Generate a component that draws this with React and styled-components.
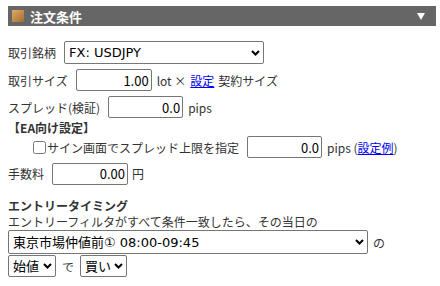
import React from 'react';
import styled, { createGlobalStyle } from 'styled-components';

const GlobalStyle = createGlobalStyle`
  body {
    margin: 0;
    background: #fff;
    font-family: "Noto Sans CJK JP", "Noto Sans", sans-serif;
    font-size: 12px;
    color: #333;
  }
`;

const Panel = styled.div`
  width: 428px;
  padding: 6px 0 0 8px;
`;

const Header = styled.div`
  height: 20px;
  background-color: #666;
  display: flex;
  align-items: center;
  padding: 0 11px 0 4px;
  color: #fff;
`;

const HeaderIcon = styled.span`
  width: 12px;
  height: 12px;
  background: linear-gradient(135deg, #e0aa66 0%, #c08848 55%, #a06c34 100%);
  margin-right: 6px;
`;

const HeaderTitle = styled.span`
  flex: 1;
  font-size: 13px;
  font-weight: bold;
`;

const Toggle = styled.span`
  width: 0;
  height: 0;
  border-left: 4px solid transparent;
  border-right: 4px solid transparent;
  border-top: 7px solid #fff;
`;

const Row = styled.div`
  display: flex;
  align-items: center;
  height: ${({ h }) => h || 22}px;
  margin-top: ${({ mt }) => mt || 0}px;
  padding-left: ${({ indent }) => indent || 0}px;
  white-space: nowrap;
`;

const Label = styled.span`
  margin-right: 8px;
`;

const Unit = styled.span`
  margin-left: ${({ ml }) => (ml === undefined ? 5 : ml)}px;
  margin-right: ${({ mr }) => mr || 0}px;
`;

const Bold = styled.div`
  font-weight: bold;
  height: 16px;
  line-height: 16px;
  margin-top: ${({ mt }) => mt || 0}px;
`;

const Line = styled.div`
  height: 16px;
  line-height: 16px;
`;

const NumInput = styled.input`
  box-sizing: border-box;
  width: ${({ w }) => w || 76}px;
  height: 22px;
  border: 1px solid #767676;
  border-radius: 2px;
  padding: 0 2px;
  text-align: right;
  font-family: "Noto Sans CJK JP", "Noto Sans", sans-serif;
  font-size: 13px;
  color: #000;
`;

const SelectWrap = styled.span`
  position: relative;
  display: inline-flex;
  width: ${({ w }) => w}px;
  height: ${({ h }) => h || 22}px;
`;

const Select = styled.select`
  appearance: none;
  box-sizing: border-box;
  width: 100%;
  height: 100%;
  font-family: "DejaVu Sans", "Noto Sans CJK JP", sans-serif;
  font-size: 13px;
  color: #000;
  background: #fff;
  border: 1px solid #767676;
  border-radius: 2px;
  padding: 0 14px 0 4px;
`;

const Chevron = styled.svg`
  position: absolute;
  right: 4px;
  top: 50%;
  margin-top: -3px;
  width: 9px;
  height: 6px;
  pointer-events: none;
`;

const Dropdown = ({ w, h, children }) => (
  <SelectWrap w={w} h={h}>
    <Select>{children}</Select>
    <Chevron viewBox="0 0 9 6">
      <path d="M1 1 L4.5 4.5 L8 1" fill="none" stroke="#000" strokeWidth="2" />
    </Chevron>
  </SelectWrap>
);

const Check = styled.input`
  width: 13px;
  height: 13px;
  margin: 0 1px 0 0;
`;

const Link = styled.a`
  color: #0000ee;
  text-decoration: underline;
`;

export default function App() {
  return (
    <>
      <GlobalStyle />
      <Panel>
        <Header>
          <HeaderIcon />
          <HeaderTitle>注文条件</HeaderTitle>
          <Toggle />
        </Header>

        <Row mt={15} h={23}>
          <Label>取引銘柄</Label>
          <Dropdown w={200} h={23}>
            <option value="USDJPY">FX: USDJPY</option>
          </Dropdown>
        </Row>

        <Row mt={5}>
          <Label>取引サイズ</Label>
          <NumInput defaultValue="1.00" />
          <Unit mr={4}>lot ×</Unit>
          <Link href="#">設定</Link>
          <Unit ml={4}>契約サイズ</Unit>
        </Row>

        <Row mt={5}>
          <Label>スプレッド(検証)</Label>
          <NumInput w={75} defaultValue="0.0" />
          <Unit>pips</Unit>
        </Row>

        <Bold mt={2}>【EA向け設定】</Bold>

        <Row indent={25}>
          <Check type="checkbox" />
          <Label>サイン画面でスプレッド上限を指定</Label>
          <NumInput w={75} defaultValue="0.0" />
          <Unit>pips (</Unit>
          <Link href="#">設定例</Link>
          <span>)</span>
        </Row>

        <Row mt={4} h={23}>
          <Label>手数料</Label>
          <NumInput defaultValue="0.00" />
          <Unit ml={4}>円</Unit>
        </Row>

        <Bold mt={13}>エントリータイミング</Bold>
        <Line>エントリーフィルタがすべて条件一致したら、その当日の</Line>

        <Row h={24}>
          <Dropdown w={360} h={24}>
            <option value="tokyo">東京市場仲値前① 08:00-09:45</option>
          </Dropdown>
          <Unit>の</Unit>
        </Row>

        <Row mt={1}>
          <Dropdown w={48}>
            <option value="open">始値</option>
          </Dropdown>
          <Unit ml={6} mr={6}>で</Unit>
          <Dropdown w={47}>
            <option value="buy">買い</option>
          </Dropdown>
        </Row>
      </Panel>
    </>
  );
}
